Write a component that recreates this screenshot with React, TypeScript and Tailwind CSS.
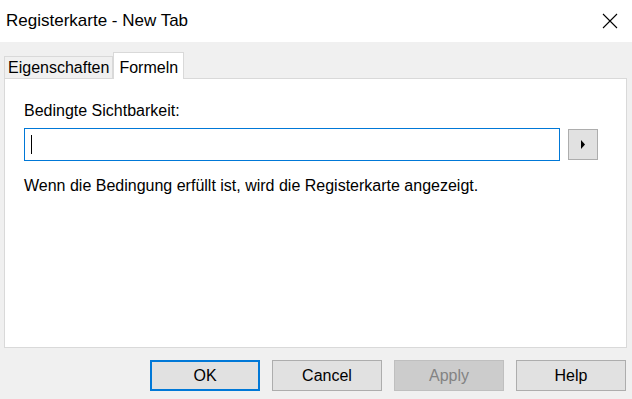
import React from 'react'

const font = { fontFamily: '"Liberation Sans", Arial, sans-serif' }

const DialogButton: React.FC<{ label: string; primary?: boolean; disabled?: boolean }> = ({ label, primary, disabled }) => {
  if (disabled) {
    return (
      <div className="w-[110px] h-[31px] flex items-center justify-center bg-[#cccccc] border border-[#bfbfbf] text-[#838383] text-[16px]">
        {label}
      </div>
    )
  }
  return (
    <div
      className={`w-[110px] h-[31px] flex items-center justify-center bg-[#e1e1e1] text-[16px] text-black ${
        primary ? 'border-2 border-[#0078d7]' : 'border border-[#adadad]'
      }`}
    >
      {label}
    </div>
  )
}

export default function App() {
  return (
    <div className="w-[632px] h-[399px] flex flex-col bg-[#f0f0f0] overflow-hidden" style={font}>
      {/* Title bar */}
      <div className="h-[42px] bg-white flex items-center justify-between pl-[6px] pr-[14px]">
        <span className="text-[17px] text-black">Registerkarte - New Tab</span>
        <svg width="16" height="16" viewBox="0 0 16 16" className="text-black">
          <path d="M1 1L15 15M15 1L1 15" stroke="currentColor" strokeWidth="1.1" />
        </svg>
      </div>

      {/* Tabs */}
      <div className="flex items-end pl-[4px] pt-[10px] relative z-10">
        <div className="h-[22px] px-[3px] flex items-center border border-b-0 border-[#d9d9d9] bg-[#f0f0f0] text-[16px] text-black">
          Eigenschaften
        </div>
        <div className="h-[27px] -mb-px px-[5px] flex items-start pt-[3px] border border-b-0 border-[#d9d9d9] bg-white text-[16px] text-black">
          Formeln
        </div>
      </div>

      {/* Panel */}
      <div className="ml-[4px] mr-[5px] h-[270px] bg-white border border-[#d9d9d9] pl-[19px] pr-[28px] pt-[22px]">
        <div className="text-[16px] text-black leading-[20px]">Bedingte Sichtbarkeit:</div>
        <div className="flex items-center gap-[8px] mt-[7px]">
          <div className="flex-1 h-[33px] border border-[#0078d7] bg-white flex items-center pl-[6px]">
            <div className="w-px h-[19px] bg-black" />
          </div>
          <div className="w-[30px] h-[31px] bg-[#e1e1e1] border border-[#adadad] flex items-center justify-center">
            <svg width="6" height="9" viewBox="0 0 6 9">
              <path d="M1 0L5 4.5L1 9Z" fill="black" />
            </svg>
          </div>
        </div>
        <div className="text-[16px] text-black leading-[20px] mt-[15px]">
          Wenn die Bedingung erfüllt ist, wird die Registerkarte angezeigt.
        </div>
      </div>

      {/* Buttons */}
      <div className="flex justify-end gap-[12px] pr-[6px] mt-[12px]">
        <DialogButton label="OK" primary />
        <DialogButton label="Cancel" />
        <DialogButton label="Apply" disabled />
        <DialogButton label="Help" />
      </div>
    </div>
  )
}
